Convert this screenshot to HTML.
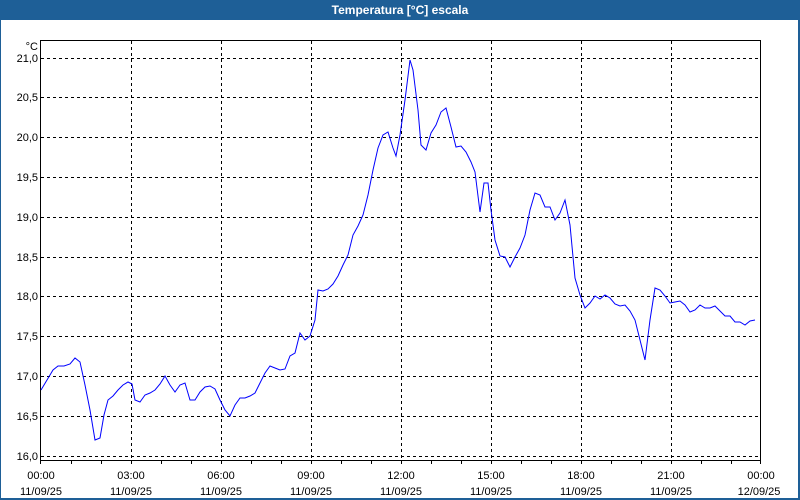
<!DOCTYPE html>
<html><head><style>
body{margin:0;width:800px;height:500px;overflow:hidden;background:#1e5f97;font-family:"Liberation Sans",sans-serif;}
#win{position:absolute;left:1px;top:20px;width:797px;height:478px;background:#fff;}
#title{position:absolute;left:0;top:0;width:800px;height:20px;color:#fff;font-weight:bold;font-size:12px;text-align:center;line-height:20px;}
svg{position:absolute;left:0;top:0;}
text{font-family:"Liberation Sans",sans-serif;font-size:11px;fill:#000;}
</style></head><body>
<div id="title">Temperatura [°C] escala</div>
<div id="win"></div>
<svg width="800" height="500">
<g stroke="#000" stroke-width="1" stroke-dasharray="3,3" fill="none">
<path d="M41 58.5H760M41 97.5H760M41 137.5H760M41 177.5H760M41 217.5H760M41 257.5H760M41 296.5H760M41 336.5H760M41 376.5H760M41 416.5H760M41 456.5H760"/>
<path d="M131.5 41V460M221.5 41V460M311.5 41V460M401.5 41V460M491.5 41V460M581.5 41V460M671.5 41V460"/>
</g>
<rect x="40.5" y="40.5" width="720" height="420" fill="none" stroke="#000"/>
<path stroke="#000" d="M71.5 461v3M101.5 461v3M131.5 461v3M161.5 461v3M191.5 461v3M221.5 461v3M251.5 461v3M281.5 461v3M311.5 461v3M341.5 461v3M371.5 461v3M401.5 461v3M431.5 461v3M461.5 461v3M491.5 461v3M521.5 461v3M551.5 461v3M581.5 461v3M611.5 461v3M641.5 461v3M671.5 461v3M701.5 461v3M731.5 461v3M40.5 461v3M760.5 461v3"/>
<polyline fill="none" stroke="#0000ff" stroke-width="1" points="41,390 47,380 53,370 58,366 64,366 70,364 75,358 80,362 85,385 90,410 95,440 100,438 104,415 108,400 113,396 118,390 123,385 128,382 132,384 135,400 140,402 145,395 150,393 155,390 160,384 165,376 170,385 175,392 180,385 185,383 190,400 195,400 200,392 205,387 210,386 215,389 220,400 225,410 230,416 235,405 240,398 245,398 250,396 255,393 260,383 265,373 270,366 275,368 280,370 285,369 290,356 295,353 300,333 305,340 310,336 315,320 318,290 323,291 328,289 333,284 338,276 343,265 348,255 353,235 358,226 363,215 368,195 373,170 378,148 383,135 388,132 393,148 396,156 400,135 405,100 410,60 413,70 418,110 421,145 426,150 431,133 436,125 441,112 446,108 451,127 456,147 461,146 466,152 471,162 475,172 480,212 484,183 488,183 491,210 495,240 500,256 505,257 510,267 515,257 520,248 525,235 530,210 535,193 540,195 545,207 550,207 555,220 560,213 565,200 570,225 575,278 580,295 585,308 590,303 595,296 600,299 605,295 610,298 615,304 620,306 625,305 630,311 635,320 640,340 645,360 650,320 655,288 660,290 665,296 670,303 675,302 680,301 685,305 690,312 695,310 700,305 705,308 710,308 715,306 720,311 725,316 730,316 735,322 740,322 745,325 750,321 755,320"/>
<g text-anchor="end">
<text x="38" y="50">°C</text>
<text x="38" y="62">21,0</text><text x="38" y="101">20,5</text><text x="38" y="141">20,0</text><text x="38" y="181">19,5</text><text x="38" y="221">19,0</text><text x="38" y="261">18,5</text><text x="38" y="300">18,0</text><text x="38" y="340">17,5</text><text x="38" y="380">17,0</text><text x="38" y="420">16,5</text><text x="38" y="460">16,0</text>
</g>
<g text-anchor="middle">
<text x="41" y="479">00:00</text><text x="41" y="495">11/09/25</text>
<text x="131" y="479">03:00</text><text x="131" y="495">11/09/25</text>
<text x="221" y="479">06:00</text><text x="221" y="495">11/09/25</text>
<text x="311" y="479">09:00</text><text x="311" y="495">11/09/25</text>
<text x="401" y="479">12:00</text><text x="401" y="495">11/09/25</text>
<text x="491" y="479">15:00</text><text x="491" y="495">11/09/25</text>
<text x="581" y="479">18:00</text><text x="581" y="495">11/09/25</text>
<text x="671" y="479">21:00</text><text x="671" y="495">11/09/25</text>
<text x="761" y="479">00:00</text><text x="759" y="495">12/09/25</text>
</g>
</svg>
</body></html>
